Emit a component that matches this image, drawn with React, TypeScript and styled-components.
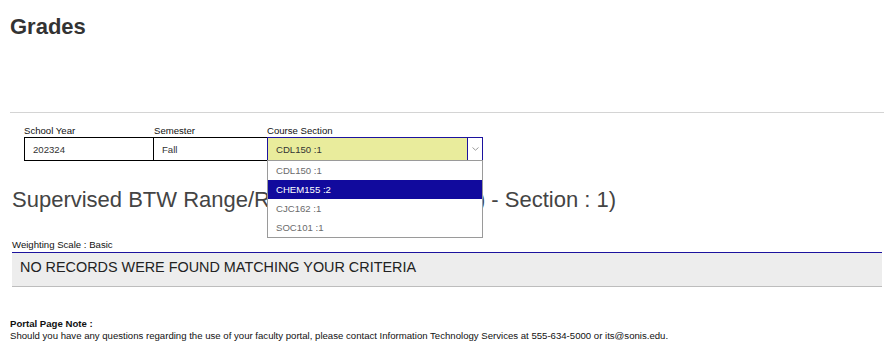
import styled, { createGlobalStyle } from "styled-components";

const GlobalStyle = createGlobalStyle`
  html, body {
    margin: 0;
    padding: 0;
    background: #fff;
  }
  body {
    font-family: "Liberation Sans", Arial, Helvetica, sans-serif;
    color: #333;
  }
`;

type CourseOption = { label: string; active?: boolean };

const courseOptions: CourseOption[] = [
  { label: "CDL150 :1" },
  { label: "CHEM155 :2", active: true },
  { label: "CJC162 :1" },
  { label: "SOC101 :1" },
];

const App = () => {
  return (
    <Page>
      <GlobalStyle />
      <Title>Grades</Title>
      <Divider />

      <Filters>
        <Field>
          <FieldLabel>School Year</FieldLabel>
          <ValueBox $width={130}>202324</ValueBox>
        </Field>
        <Field>
          <FieldLabel>Semester</FieldLabel>
          <ValueBox $width={114} $noRight>
            Fall
          </ValueBox>
        </Field>
        <Field>
          <FieldLabel>Course Section</FieldLabel>
          <SelectWrap>
            <SelectBox>
              <SelectValue>CDL150 :1</SelectValue>
              <SelectArrow>
                <svg width="7" height="4" viewBox="0 0 7 4">
                  <path d="M0.5 0.5 L3.5 3.2 L6.5 0.5" fill="none" stroke="#9a9a9a" strokeWidth="1" />
                </svg>
              </SelectArrow>
            </SelectBox>
            <OptionList>
              {courseOptions.map((o) => (
                <OptionItem key={o.label} $active={o.active}>
                  {o.label}
                </OptionItem>
              ))}
            </OptionList>
          </SelectWrap>
        </Field>
      </Filters>

      <CourseHeading>Supervised BTW Range/Road Course (CDL150) - Section : 1)</CourseHeading>

      <ScaleLabel>Weighting Scale : Basic</ScaleLabel>
      <ResultsPanel>NO RECORDS WERE FOUND MATCHING YOUR CRITERIA</ResultsPanel>

      <Footer>
        <NoteTitle>Portal Page Note :</NoteTitle>
        <NoteText>
          Should you have any questions regarding the use of your faculty portal, please contact Information
          Technology Services at 555-634-5000 or its@sonis.edu.
        </NoteText>
      </Footer>
    </Page>
  );
};

const Page = styled.div`
  width: 896px;
  padding: 0 10px;
  box-sizing: border-box;
`;

const Title = styled.h1`
  margin: 16px 0 0;
  font-size: 22px;
  line-height: 22px;
  font-weight: bold;
  color: #333;
`;

const Divider = styled.div`
  margin-top: 74px;
  width: 874px;
  height: 1px;
  background: #d4d4d4;
`;

const Filters = styled.div`
  display: flex;
  margin: 12px 0 0 14px;
`;

const Field = styled.div`
  display: flex;
  flex-direction: column;
`;

const FieldLabel = styled.div`
  font-size: 9.6px;
  line-height: 12px;
  color: #111;
  white-space: nowrap;
`;

const ValueBox = styled.div<{ $width: number; $noRight?: boolean }>`
  width: ${(p) => p.$width}px;
  height: 24px;
  box-sizing: border-box;
  border: 1px solid #000;
  border-right: ${(p) => (p.$noRight ? "none" : "1px solid #000")};
  margin-left: ${(p) => (p.$noRight ? "-1px" : "0")};
  padding-left: 8px;
  display: flex;
  align-items: center;
  font-size: 9.6px;
  color: #333;
`;

const SelectWrap = styled.div`
  position: relative;
  width: 216px;
`;

const SelectBox = styled.div`
  display: flex;
  height: 24px;
  box-sizing: border-box;
  border: 1px solid #1c139e;
  background: #e9ec9c;
`;

const SelectValue = styled.div`
  flex: 1;
  display: flex;
  align-items: center;
  padding-left: 8px;
  font-size: 9.6px;
  color: #333;
`;

const SelectArrow = styled.div`
  width: 14px;
  display: flex;
  align-items: center;
  justify-content: center;
  border-left: 1px solid #1c139e;
  background: #fff;
`;

const OptionList = styled.div`
  position: absolute;
  top: 23px;
  left: 0;
  width: 216px;
  box-sizing: border-box;
  border: 1px solid #9a9a9a;
  background: #fff;
  z-index: 5;
`;

const OptionItem = styled.div<{ $active?: boolean }>`
  height: 19px;
  display: flex;
  align-items: center;
  padding-left: 8px;
  font-size: 9.6px;
  color: ${(p) => (p.$active ? "#fff" : "#6b6b6b")};
  background: ${(p) => (p.$active ? "#110a9d" : "transparent")};
`;

const CourseHeading = styled.h2`
  margin: 26px 0 0 2px;
  font-size: 22px;
  line-height: 26px;
  font-weight: normal;
  color: #444;
  white-space: nowrap;
`;

const ScaleLabel = styled.div`
  margin: 25px 0 0 2px;
  font-size: 9.6px;
  line-height: 14px;
  height: 14px;
  color: #111;
`;

const ResultsPanel = styled.div`
  margin-left: 2px;
  width: 870px;
  box-sizing: border-box;
  border-top: 1px solid #1c139e;
  border-bottom: 1px solid #bdbdbd;
  background: #ededed;
  padding: 5px 8px 10px;
  font-size: 14.4px;
  line-height: 18px;
  color: #222;
`;

const Footer = styled.div`
  margin-top: 31px;
`;

const NoteTitle = styled.div`
  font-size: 9.6px;
  line-height: 12px;
  font-weight: bold;
  color: #111;
`;

const NoteText = styled.div`
  font-size: 9.6px;
  line-height: 12px;
  color: #111;
`;

export default App;
